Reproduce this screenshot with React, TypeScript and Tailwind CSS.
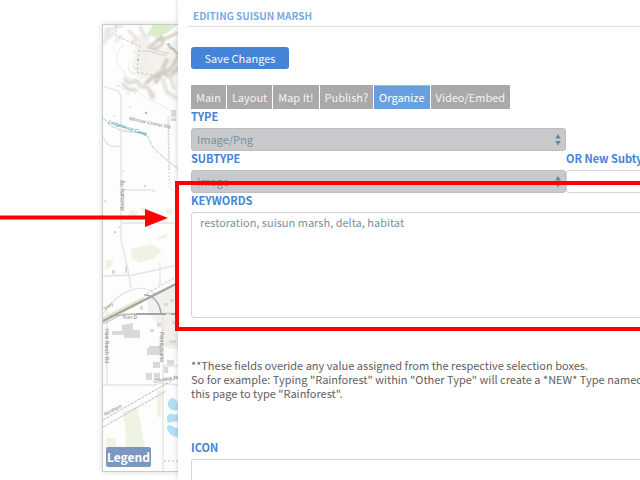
import type { ReactNode } from "react";

const tabs = ["Main", "Layout", "Map It!", "Publish?", "Organize", "Video/Embed"];

function FieldLabel({ htmlFor, children }: { htmlFor: string; children: ReactNode }) {
  return (
    <label htmlFor={htmlFor} className="block mb-1 h-[15px] text-[11px] leading-[15px] font-bold text-[#4384d6] whitespace-nowrap">
      {children}
    </label>
  );
}

function SelectBox({ id, value }: { id: string; value: string }) {
  return (
    <div className="relative w-[375px]">
      <select
        id={id}
        defaultValue={value}
        className="block appearance-none w-full h-[23px] pl-[5px] pb-[2px] rounded-[3px] border border-[#bcbfc2] bg-[#c8c9cb] text-[11px] leading-[18px] text-[#7891a3]"
      >
        <option>{value}</option>
      </select>
      <svg viewBox="0 0 6 12" className="absolute right-[5px] top-[6px] w-[6px] h-[12px] pointer-events-none" aria-hidden="true">
        <path d="M3 0 5.8 4.6H.2zM3 11.5.2 7h5.6z" fill="#64879b" />
      </svg>
    </div>
  );
}

function MapView() {
  return (
    <svg viewBox="103 25 75 446" className="block w-[75px] h-[446px] bg-[#fdfdfd]" role="img" aria-label="Map of Suisun Marsh">
      <defs>
        <filter id="soft" x="-20%" y="-20%" width="140%" height="140%">
          <feGaussianBlur stdDeviation="1.1" />
        </filter>
      </defs>

      {/* hills */}
      <g filter="url(#soft)" fill="none" strokeLinecap="round" strokeLinejoin="round">
        <path d="M103 44 110 29 122 26M108 38l6-5M105 34l3-6M116 41l5-5" stroke="#e8e5de" strokeWidth="3" />
        <path d="M140 34c10 3 12 14 22 14s10-8 16-10v34c-12 5-26 3-38 8l-8-14c4-10 3-20 8-32z" fill="#f3f1eb" />
        <path d="M129 31l8 8-5 4M140 27l4 8 4 2" stroke="#e4e0d8" strokeWidth="3" />
        <path d="M150 47l7-6 7-3-2 7-8 4M167 38l10-5M156 41l5-5" stroke="#d3cec4" strokeWidth="3" />
        <path d="M178 57l-8 13-9 2-9 6-6 5M178 68l-8 9-8-5-6 10M167 60l-4 8" stroke="#d3cec4" strokeWidth="4" />
        <path d="M125 79l4 4 8-2 3 5 8 2 4 10M148 88l6 8M123 84l5 5 8 1" stroke="#dcd7cd" strokeWidth="3" />
        <path d="M163 80l4 12 9 6M170 76l4 12" stroke="#e5e2da" strokeWidth="4" />
      </g>
      <path d="M153 25h24l-10 8-12 4-8-2z" fill="#d8edc8" />
      <g fill="none" stroke="#deddd9" strokeWidth=".6">
        <path d="M124 44c-8 7-10 18-3 24s2 9 8 11M132 59c-6 5-4 14 4 14M128 68c3 10 12 7 15-1M124 75c5 7 13 2 17 7s8 8 12 2" />
        <path d="M131 54c7-6 16-3 15 6s-10 12-14 6M137 91c8 9 20 10 33 20M118 84c3 8 13 4 18 10" />
        <path d="M146 48c10-1 14 6 23 5M143 51c11-1 14 5 24 4" stroke="#bbb" />
      </g>
      <path d="M116 25v11l24 10-3 26 24 5" fill="none" stroke="#b9b9b9" strokeWidth=".8" strokeDasharray="2.5 2" />
      <g fill="#bbb">
        <circle cx="118" cy="86" r=".7" /><circle cx="128" cy="93" r=".7" /><circle cx="130" cy="107" r=".7" />
        <circle cx="146" cy="113" r="1.3" /><circle cx="114" cy="116" r=".7" /><circle cx="138" cy="60" r="1.1" />
        <circle cx="123" cy="171" r=".7" /><circle cx="125" cy="182" r=".7" /><circle cx="145" cy="186" r=".9" />
        <circle cx="105" cy="201" r=".8" /><circle cx="119" cy="227" r=".7" /><circle cx="154" cy="191" r=".7" />
        <circle cx="115" cy="232" r="1" /><circle cx="152" cy="250" r=".7" /><circle cx="160" cy="264" r=".7" />
      </g>

      {/* fields */}
      <g fill="#eff3e3">
        <path d="M131 249l21-5 10 7-8 7-15 5-7-5z" />
        <path d="M105 260l8-1-1 7-6 3zM130 210l9 1-3 5-7-1zM140 207l8 3-5 4zM166 209l8-1-2 7-6-1z" />
        <path d="M158 237l10-3-2 4-9 2z" />
        <path d="M123 412l14-6 5 25 4 23-22 2 2-20zM137 447h9v10h-10zM106 438h9l3 16-11 3zM157 391h5l-1 26h-4z" />
      </g>
      <path d="M178 282l-32 14 3 17 12 16-3 17 20 4z" fill="#f2f0ec" />
      <path d="M103 317l42-21-3 7-39 20z" fill="#dcebc9" />

      {/* water */}
      <path d="M103 118l8 8 11 5 21 2 5 4 4 9 9 9 17 14" fill="none" stroke="#8fc8d1" strokeWidth=".8" strokeDasharray="5 1" />
      <g fill="#b2dff6">
        <path d="M168 403c2-8 8-5 10 0v7c-6 2-11-2-10-7zM167 416c4-5 7 0 11-2v8c-5-2-9 3-11-1zM167 426c3-4 6 3 11 2v9c-7 0-11-5-11-11z" />
      </g>

      {/* roads */}
      <g fill="none" stroke="#e3e3e1" strokeWidth="1.3">
        <path d="M103 86l15 5 3 5v144M103 137c5 10 8 10 18 9M121 190h32M121 223h53" />
        <path d="M121 240l7 30 3 18M103 276l30-1 45-10M160 266v20M103 314c14-23 42-35 54-17" />
        <path d="M169 170l-1-53M103 385h52l5-2 18 2M163 310v161M107 311v74M163 366h15M160 344h18" />
      </g>
      <path d="M169 116v70l5 6" fill="none" stroke="#cfcfcf" strokeDasharray="1.5 2" />
      <g fill="none" stroke="#a4a4a4" strokeLinecap="round">
        <path d="M103 321l75-38" strokeWidth="2.4" />
        <path d="M137 314h41" strokeWidth="2.2" />
        <path d="M145 295c8 0 15 8 16 19" strokeWidth="1.5" />
        <path d="M110 316l27-2M103 324l20-10h43" strokeWidth=".7" />
      </g>
      <g fill="none" stroke="#b4b4b4" strokeWidth=".9">
        <path d="M103 420l75-43M103 427l63-36" strokeDasharray="3 1" />
        <path d="M164 461h14M144 295l34-19" strokeDasharray="2 2" />
      </g>

      {/* buildings */}
      <g fill="#d9d9d9">
        <path d="M122 325l11-2v7h7v8h-16v-3h-12v-4h10zM149 346h12v9h-14v-7h2z" />
        <path d="M153 362h7v6h-7zM146 373h6v7h-6zM154 373h6v7h-6zM164 367h4v6h-4zM167 360h7v5h-7zM169 340h7v3h-7z" />
        <path d="M164 303h4v3h-4zM170 299h4v3h-4zM166 312h5v3h-5zM150 329h4v3h-4zM157 323h4v4h-4zM172 321h5v3h-5zM140 306h3v4h-3z" />
        <path d="M171 110h5v7h-5zM171 118h5v3h-5zM112 270h3v4h-3zM125 266h2v7h-2z" />
      </g>

      <g fontFamily="Liberation Sans" fontSize="5" fill="#808080">
        <text transform="translate(129 120) rotate(12)">Morrow Cosner Rd</text>
        <text transform="translate(166 45) rotate(42)">Ramsey</text>
        <text transform="translate(108 123) rotate(19)" fill="#2f8796" fontStyle="italic">
          Ledgewood Creek
        </text>
        <text transform="translate(124 211) rotate(-90)">Abernathy Rd</text>
        <text transform="translate(105 311) rotate(-38)">Trwy</text>
        <text x="123" y="319">Kurt D</text>
        <text transform="translate(105 329) rotate(90)">Hale Ranch Rd</text>
        <text transform="translate(160 332) rotate(90)">Pennsylvania</text>
        <text transform="translate(154 383) rotate(-10)">Cordelia Rd</text>
        <text transform="translate(105 416) rotate(-27)">Northern</text>
      </g>
    </svg>
  );
}

export default function App() {
  return (
    <div className="relative flex min-h-screen overflow-hidden bg-white font-['Noto_Sans_CJK_SC',sans-serif] text-[11px]">
      <aside className="shrink-0 w-[178px] pt-6 pl-[102px]">
        <div className="relative border-l border-y border-[#cbcbcb] shadow-[0_0_6px_rgba(0,0,0,0.15)]">
          <MapView />
          <button type="button" className="absolute left-[3px] bottom-1 h-5 w-[45px] rounded-[2px] bg-[#7b99c0] text-[12px] leading-5 font-bold text-white">
            Legend
          </button>
        </div>
      </aside>

      <main className="relative flex-1 min-w-0 overflow-x-clip pl-[13px] bg-white shadow-[0_0_5px_rgba(0,0,0,0.2)]">
        <h1 className="-ml-1 pl-[6px] pt-2 h-[27px] border-b border-[#e0e1e2] text-[10px] leading-[15px] font-bold text-[#78a9e5]">
          EDITING SUISUN MARSH
        </h1>

        <button type="button" className="block mt-5 w-[98px] h-[22px] rounded-[3px] bg-[#4384d6] leading-[20px] text-[#f4f8fd]">
          Save Changes
        </button>

        <nav className="flex gap-px mt-4">
          {tabs.map((tab) => (
            <button
              key={tab}
              type="button"
              className={
                tab === "Organize"
                  ? "h-6 px-[5px] pb-[2px] border-t border-[#efb04c] bg-[#699fdf] leading-[20px] text-white whitespace-nowrap"
                  : "h-6 px-[5px] pb-[2px] border-t border-[#a9a9a9] bg-[#a9a9a9] leading-[20px] text-[#f4f4f4] whitespace-nowrap"
              }
            >
              {tab}
            </button>
          ))}
        </nav>

        <FieldLabel htmlFor="type">TYPE</FieldLabel>
        <SelectBox id="type" value="Image/Png" />

        <div className="flex">
          <div className="shrink-0">
            <FieldLabel htmlFor="subtype">SUBTYPE</FieldLabel>
            <SelectBox id="subtype" value="Image" />
          </div>
          <div className="shrink-0">
            <FieldLabel htmlFor="new-subtype">OR New Subtype**</FieldLabel>
            <input id="new-subtype" type="text" className="block w-[200px] h-[23px] px-2 rounded-[3px] border border-[#d2d4d5]" />
          </div>
        </div>

        <FieldLabel htmlFor="keywords">KEYWORDS</FieldLabel>
        <textarea
          id="keywords"
          defaultValue="restoration, suisun marsh, delta, habitat"
          className="block w-[calc(100%+8px)] h-[106px] px-2 py-[2px] rounded-[3px] border border-[#d2d4d5] leading-[15px] text-[#7891a3] resize-none"
        />

        <p className="mt-10 leading-[14px] text-[#606060] whitespace-nowrap">
          **These fields overide any value assigned from the respective selection boxes.
          <br />
          So for example: Typing "Rainforest" within "Other Type" will create a *NEW* Type named
          <br />
          this page to type "Rainforest".
        </p>

        <div className="mt-10">
          <FieldLabel htmlFor="icon">ICON</FieldLabel>
          <textarea id="icon" className="block w-[calc(100%+8px)] h-[21px] rounded-t-[3px] border border-b-0 border-[#d2d4d5] resize-none" />
        </div>
      </main>

      {/* callout around the keywords field */}
      <div className="absolute top-[181px] left-[175px] -right-1 h-[150px] border-4 border-[#ff0000] pointer-events-none" />
      <svg viewBox="0 0 168 18" className="absolute top-[209px] left-0 w-[168px] h-[18px] pointer-events-none" aria-hidden="true">
        <path d="M0 6.5h145V0l23 9-23 9v-7.5H0z" fill="#ff0000" />
      </svg>
    </div>
  );
}
